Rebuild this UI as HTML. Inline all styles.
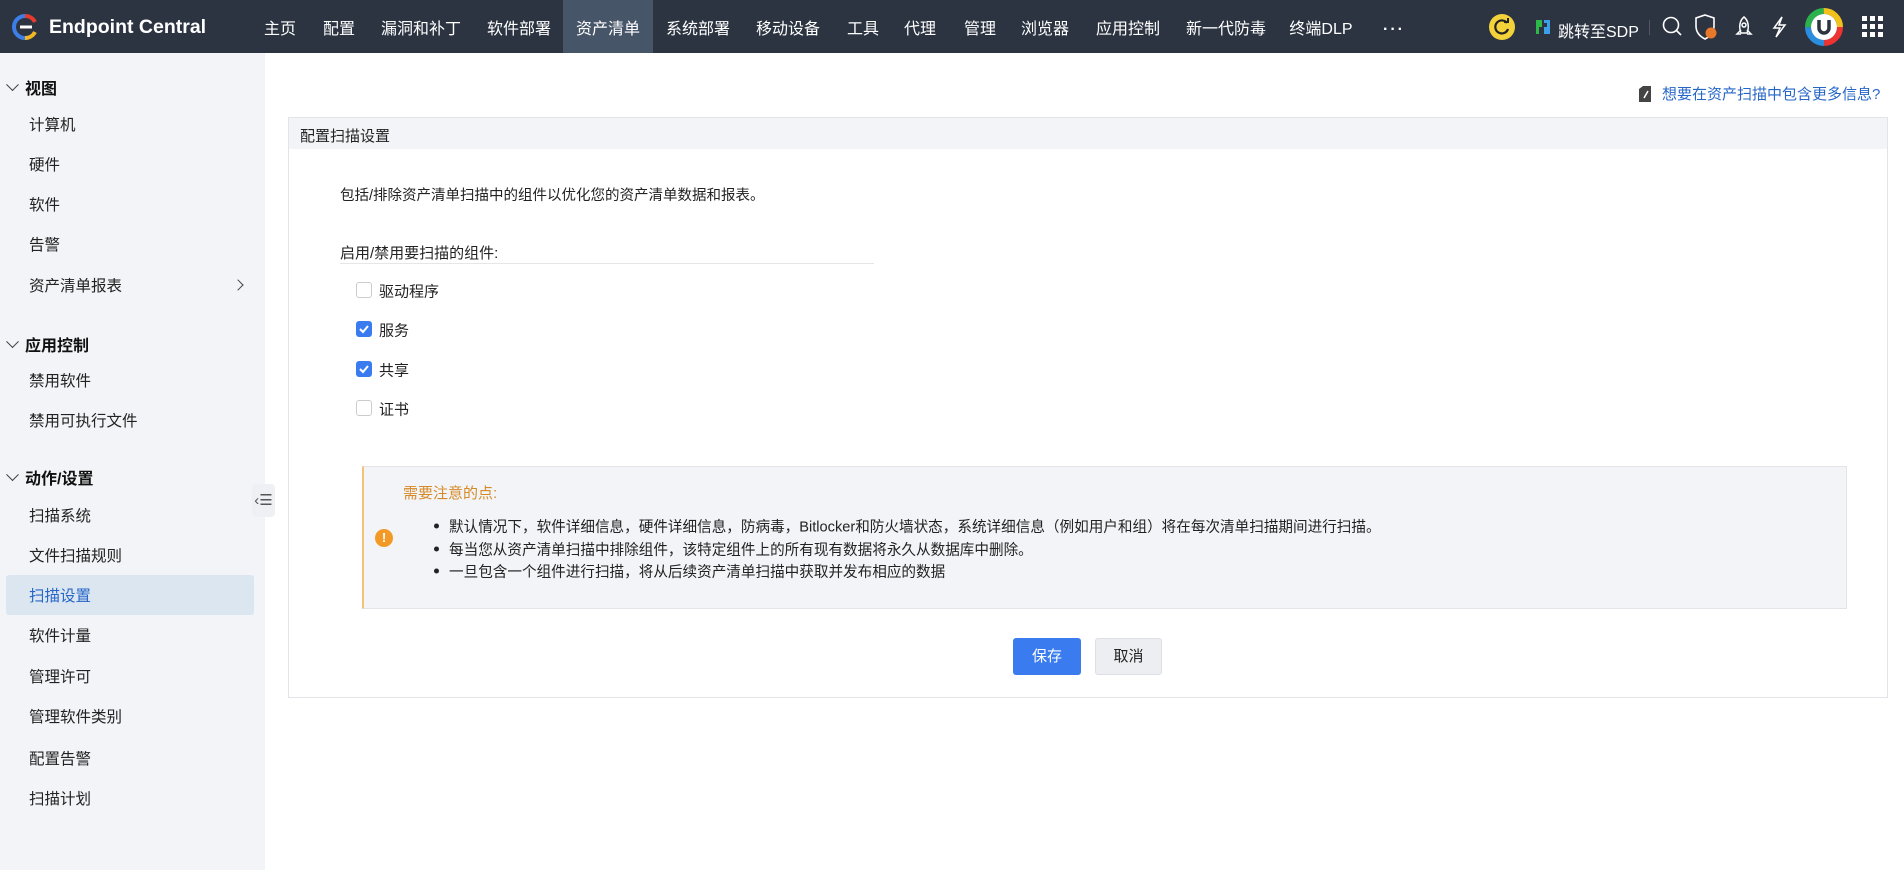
<!DOCTYPE html>
<html><head><meta charset="utf-8"><style>
*{margin:0;padding:0;box-sizing:border-box}
body{width:1904px;height:870px;background:#fff;font-family:"Liberation Sans","Noto Sans CJK SC",sans-serif;color:#222;position:relative;overflow:hidden}
.a{position:absolute;white-space:nowrap}
.hdr{position:absolute;left:0;top:0;width:1904px;height:53px;background:#2c3442}
.nav{position:absolute;top:27px;transform:translate(-50%,-50%);color:#fff;font-size:16px}
.side{position:absolute;left:0;top:53px;width:265px;height:817px;background:#f3f4f8}
.si{position:absolute;left:29px;transform:translateY(-50%);font-size:15.5px;color:#222}
.sh{position:absolute;left:25px;transform:translateY(-50%);font-size:16px;font-weight:bold;color:#111}
.chev{position:absolute;left:8px;width:9px;height:9px;border-right:1.5px solid #444;border-bottom:1.5px solid #444;transform:translateY(-75%) rotate(45deg)}
.cb{position:absolute;left:356px;width:16px;height:16px;border:1px solid #ccc;border-radius:3px;background:#fff}
.cb.on{background:#3a7cf0;border-color:#3a7cf0}
.cl{position:absolute;left:379px;transform:translateY(-50%);font-size:15px}
.bl{position:absolute;left:449px;transform:translateY(-50%);font-size:14.6px;color:#222}
.dot{position:absolute;left:434px;width:5px;height:5px;border-radius:50%;background:#222;transform:translateY(-50%)}
</style></head><body>
<div class="hdr"></div>
<svg class="a" style="left:12px;top:14px" width="26" height="26" viewBox="0 0 26 26"><path d="M13 2 A11 11 0 0 0 2 13" stroke="#3d7ee8" stroke-width="4" fill="none"/><path d="M2 13 A11 11 0 0 0 13 24" stroke="#3d7ee8" stroke-width="4" fill="none"/><path d="M13 2 A11 11 0 0 1 23 8" stroke="#e63b2e" stroke-width="4" fill="none"/><path d="M23 18 A11 11 0 0 1 13 24" stroke="#f2b824" stroke-width="4" fill="none"/><path d="M8 13 H20" stroke="#fff" stroke-width="3"/></svg>
<div class="a" style="left:49px;top:16px;color:#fff;font-size:19.5px;font-weight:bold">Endpoint Central</div>
<div class="a" style="left:563px;top:0;width:90px;height:53px;background:#475569"></div>
<div class="nav" style="left:280px">主页</div>
<div class="nav" style="left:339px">配置</div>
<div class="nav" style="left:421px">漏洞和补丁</div>
<div class="nav" style="left:519px">软件部署</div>
<div class="nav" style="left:608px">资产清单</div>
<div class="nav" style="left:698px">系统部署</div>
<div class="nav" style="left:788px">移动设备</div>
<div class="nav" style="left:863px">工具</div>
<div class="nav" style="left:920px">代理</div>
<div class="nav" style="left:980px">管理</div>
<div class="nav" style="left:1045px">浏览器</div>
<div class="nav" style="left:1128px">应用控制</div>
<div class="nav" style="left:1226px">新一代防毒</div>
<div class="nav" style="left:1321px">终端DLP</div>
<div class="nav" style="left:1394px;top:30px;font-weight:bold;letter-spacing:2px">···</div>
<svg class="a" style="left:1488px;top:13px" width="28" height="28" viewBox="0 0 28 28"><circle cx="14" cy="14" r="13" fill="#f4d33a"/><path d="M19 10 A6.5 6.5 0 1 0 20 16" stroke="#222" stroke-width="2.2" fill="none"/><path d="M16 9 L20 9 L20 5" stroke="#222" stroke-width="2" fill="none"/></svg>
<svg class="a" style="left:1534px;top:18px" width="18" height="18" viewBox="0 0 18 18"><path d="M2 2 H8 V9 H5 V16 H2 Z" fill="#2db84a"/><path d="M10 2 H16 V16 H10 V9 H13 V5 H10Z" fill="#3aa0e8"/></svg>
<div class="a" style="left:1558px;top:18px;color:#fff;font-size:16px">跳转至SDP</div>
<div class="a" style="left:1649px;top:20px;width:1px;height:15px;background:#556"></div>
<svg class="a" style="left:1661px;top:15px" width="22" height="22" viewBox="0 0 22 22" fill="none" stroke="#fff" stroke-width="1.6"><circle cx="10" cy="10" r="7.5"/><path d="M15.5 15.5 L20 20"/></svg>
<svg class="a" style="left:1694px;top:13px" width="26" height="28" viewBox="0 0 26 28"><path d="M11 2 L20 5 V13 C20 20 15 24 11 26 C7 24 2 20 2 13 V5 Z" fill="none" stroke="#fff" stroke-width="1.6"/><circle cx="17" cy="20" r="5.5" fill="#e8792b"/></svg>
<svg class="a" style="left:1734px;top:15px" width="20" height="24" viewBox="0 0 20 24" fill="none" stroke="#fff" stroke-width="1.5"><path d="M10 2 C15 6 15 13 13 18 H7 C5 13 5 6 10 2Z"/><circle cx="10" cy="10" r="2"/><path d="M7 15 L3 19 H7 M13 15 L17 19 H13"/></svg>
<svg class="a" style="left:1770px;top:15px" width="18" height="24" viewBox="0 0 18 24" fill="none" stroke="#fff" stroke-width="1.5"><path d="M12 2 L4 13 H10 L6 22 L15 10 H9 Z"/></svg>
<svg class="a" style="left:1804px;top:7px" width="40" height="40" viewBox="0 0 40 40"><circle cx="20" cy="20" r="16" fill="none" stroke="#e33" stroke-width="6" stroke-dasharray="25 100"/><circle cx="20" cy="20" r="16" fill="none" stroke="#2a8de0" stroke-width="6" stroke-dasharray="0 25 25 100"/><circle cx="20" cy="20" r="16" fill="none" stroke="#2bb24c" stroke-width="6" stroke-dasharray="0 50 25 100"/><circle cx="20" cy="20" r="16" fill="none" stroke="#f2c21b" stroke-width="6" stroke-dasharray="0 75 26 100"/><circle cx="20" cy="20" r="13" fill="#fff"/><path d="M15 13 V21 A5 5 0 0 0 25 21 V13" stroke="#2c3442" stroke-width="3.5" fill="none"/></svg>
<svg class="a" style="left:1862px;top:16px" width="22" height="22" viewBox="0 0 22 22" fill="#fff"><rect x="0" y="0" width="5" height="5"/><rect x="8" y="0" width="5" height="5"/><rect x="16" y="0" width="5" height="5"/><rect x="0" y="8" width="5" height="5"/><rect x="8" y="8" width="5" height="5"/><rect x="16" y="8" width="5" height="5"/><rect x="0" y="16" width="5" height="5"/><rect x="8" y="16" width="5" height="5"/><rect x="16" y="16" width="5" height="5"/></svg>

<div class="side"></div>
<div class="chev" style="top:87px"></div><div class="sh" style="top:87px">视图</div>
<div class="si" style="top:124px">计算机</div>
<div class="si" style="top:164px">硬件</div>
<div class="si" style="top:204px">软件</div>
<div class="si" style="top:244px">告警</div>
<div class="si" style="top:285px">资产清单报表</div>
<div class="a" style="left:234px;top:281px;width:8px;height:8px;border-right:1.5px solid #444;border-top:1.5px solid #444;transform:rotate(45deg)"></div>
<div class="chev" style="top:344px"></div><div class="sh" style="top:344px">应用控制</div>
<div class="si" style="top:380px">禁用软件</div>
<div class="si" style="top:420px">禁用可执行文件</div>
<div class="chev" style="top:477px"></div><div class="sh" style="top:477px">动作/设置</div>
<div class="si" style="top:515px">扫描系统</div>
<div class="si" style="top:555px">文件扫描规则</div>
<div class="a" style="left:6px;top:575px;width:248px;height:40px;background:#dce6f1;border-radius:3px"></div>
<div class="si" style="top:595px;color:#2566c7">扫描设置</div>
<div class="si" style="top:635px">软件计量</div>
<div class="si" style="top:676px">管理许可</div>
<div class="si" style="top:716px">管理软件类别</div>
<div class="si" style="top:758px">配置告警</div>
<div class="si" style="top:798px">扫描计划</div>
<div class="a" style="left:252px;top:484px;width:23px;height:33px;background:#eef0f4;border-radius:4px;font-size:15px;color:#555;text-align:center;line-height:33px">‹☰</div>

<svg class="a" style="left:1637px;top:85px" width="16" height="18" viewBox="0 0 16 18"><path d="M2 4 L6 1 H14 V17 H2Z" fill="#444"/><path d="M7 13 L11 6" stroke="#fff" stroke-width="1.5"/></svg>
<div class="a" style="left:1662px;top:83px;font-size:15px;color:#2566c7">想要在资产扫描中包含更多信息?</div>

<div class="a" style="left:288px;top:117px;width:1600px;height:581px;border:1px solid #e2e4e8"></div>
<div class="a" style="left:289px;top:118px;width:1598px;height:31px;background:#f3f4f8"></div>
<div class="a" style="left:300px;top:125px;font-size:15px;color:#222">配置扫描设置</div>
<div class="a" style="left:340px;top:184px;font-size:14.5px">包括/排除资产清单扫描中的组件以优化您的资产清单数据和报表。</div>
<div class="a" style="left:340px;top:242px;font-size:15px">启用/禁用要扫描的组件:</div>
<div class="a" style="left:340px;top:263px;width:534px;height:1px;background:#e6e6e6"></div>
<div class="cb" style="top:282px"></div><div class="cl" style="top:291px">驱动程序</div>
<div class="cb on" style="top:321px"><svg width="14" height="14" viewBox="0 0 14 14"><path d="M3 7 L6 10 L11 4" stroke="#fff" stroke-width="2" fill="none"/></svg></div><div class="cl" style="top:330px">服务</div>
<div class="cb on" style="top:361px"><svg width="14" height="14" viewBox="0 0 14 14"><path d="M3 7 L6 10 L11 4" stroke="#fff" stroke-width="2" fill="none"/></svg></div><div class="cl" style="top:370px">共享</div>
<div class="cb" style="top:400px"></div><div class="cl" style="top:409px">证书</div>

<div class="a" style="left:362px;top:466px;width:1485px;height:143px;background:#f3f4f8;border:1px solid #e2e4e8;border-left:2px solid #f5c27a"></div>
<div class="a" style="left:403px;top:482px;font-size:15px;color:#d68a26">需要注意的点:</div>
<div class="a" style="left:375px;top:529px;width:18px;height:18px;border-radius:50%;background:#f39a26;color:#fff;font-size:13px;font-weight:bold;text-align:center;line-height:18px">!</div>
<div class="dot" style="top:526px"></div><div class="bl" style="top:526px">默认情况下，软件详细信息，硬件详细信息，防病毒，Bitlocker和防火墙状态，系统详细信息（例如用户和组）将在每次清单扫描期间进行扫描。</div>
<div class="dot" style="top:549px"></div><div class="bl" style="top:549px">每当您从资产清单扫描中排除组件，该特定组件上的所有现有数据将永久从数据库中删除。</div>
<div class="dot" style="top:571px"></div><div class="bl" style="top:571px">一旦包含一个组件进行扫描，将从后续资产清单扫描中获取并发布相应的数据</div>

<div class="a" style="left:1013px;top:638px;width:68px;height:37px;background:#3a7cf0;border-radius:3px;color:#fff;font-size:15px;text-align:center;line-height:37px">保存</div>
<div class="a" style="left:1095px;top:638px;width:67px;height:37px;background:#eceef1;border:1px solid #dcdfe4;border-radius:3px;color:#222;font-size:15px;text-align:center;line-height:35px">取消</div>
</body></html>
